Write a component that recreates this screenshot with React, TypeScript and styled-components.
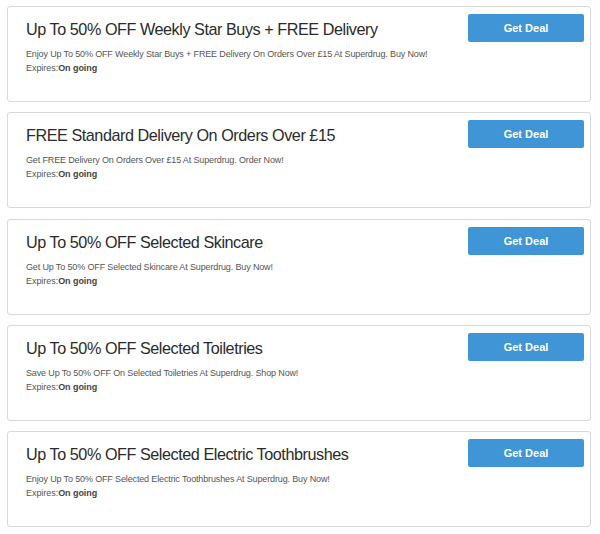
import React from 'react';
import styled, { createGlobalStyle } from 'styled-components';

interface Deal {
  title: string;
  description: string;
  expires: string;
}

const deals: Deal[] = [
  {
    title: 'Up To 50% OFF Weekly Star Buys + FREE Delivery',
    description: 'Enjoy Up To 50% OFF Weekly Star Buys + FREE Delivery On Orders Over £15 At Superdrug. Buy Now!',
    expires: 'On going',
  },
  {
    title: 'FREE Standard Delivery On Orders Over £15',
    description: 'Get FREE Delivery On Orders Over £15 At Superdrug. Order Now!',
    expires: 'On going',
  },
  {
    title: 'Up To 50% OFF Selected Skincare',
    description: 'Get Up To 50% OFF Selected Skincare At Superdrug. Buy Now!',
    expires: 'On going',
  },
  {
    title: 'Up To 50% OFF Selected Toiletries',
    description: 'Save Up To 50% OFF On Selected Toiletries At Superdrug. Shop Now!',
    expires: 'On going',
  },
  {
    title: 'Up To 50% OFF Selected Electric Toothbrushes',
    description: 'Enjoy Up To 50% OFF Selected Electric Toothbrushes At Superdrug. Buy Now!',
    expires: 'On going',
  },
];

const GlobalStyle = createGlobalStyle`
  html, body {
    margin: 0;
    padding: 0;
    background: #fff;
  }
  body {
    font-family: "Liberation Sans", Arial, sans-serif;
    color: #333;
  }
`;

const List = styled.div`
  display: flex;
  flex-direction: column;
  gap: 10.3px;
  padding: 6px 9px 0 7px;
`;

const Card = styled.div`
  display: flex;
  justify-content: space-between;
  align-items: flex-start;
  height: 96px;
  box-sizing: border-box;
  border: 1px solid #d9d9d9;
  border-radius: 3px;
  background: #fff;
  padding: 7px 6px 0 18px;
`;

const Info = styled.div`
  display: flex;
  flex-direction: column;
  padding-top: 5px;
`;

const Title = styled.h3`
  margin: 0;
  font-size: 16.2px;
  font-weight: normal;
  letter-spacing: -0.45px;
  line-height: 20px;
  color: #2b2b2b;
`;

const Description = styled.p`
  margin: 8px 0 0;
  font-size: 9px;
  letter-spacing: -0.14px;
  line-height: 14px;
  color: #555;
`;

const Expires = styled.p`
  margin: 0;
  font-size: 9px;
  letter-spacing: -0.05px;
  line-height: 15px;
  color: #555;

  strong {
    color: #444;
  }
`;

const DealButton = styled.button`
  flex: none;
  width: 116px;
  height: 28px;
  border: none;
  border-radius: 2px;
  background: #4095d7;
  color: #fff;
  font-family: "Liberation Sans", Arial, sans-serif;
  font-size: 11px;
  font-weight: bold;
  cursor: pointer;
`;

export default function App() {
  return (
    <>
      <GlobalStyle />
      <List>
        {deals.map((deal) => (
          <Card key={deal.title}>
            <Info>
              <Title>{deal.title}</Title>
              <Description>{deal.description}</Description>
              <Expires>
                Expires:<strong>{deal.expires}</strong>
              </Expires>
            </Info>
            <DealButton>Get Deal</DealButton>
          </Card>
        ))}
      </List>
    </>
  );
}
